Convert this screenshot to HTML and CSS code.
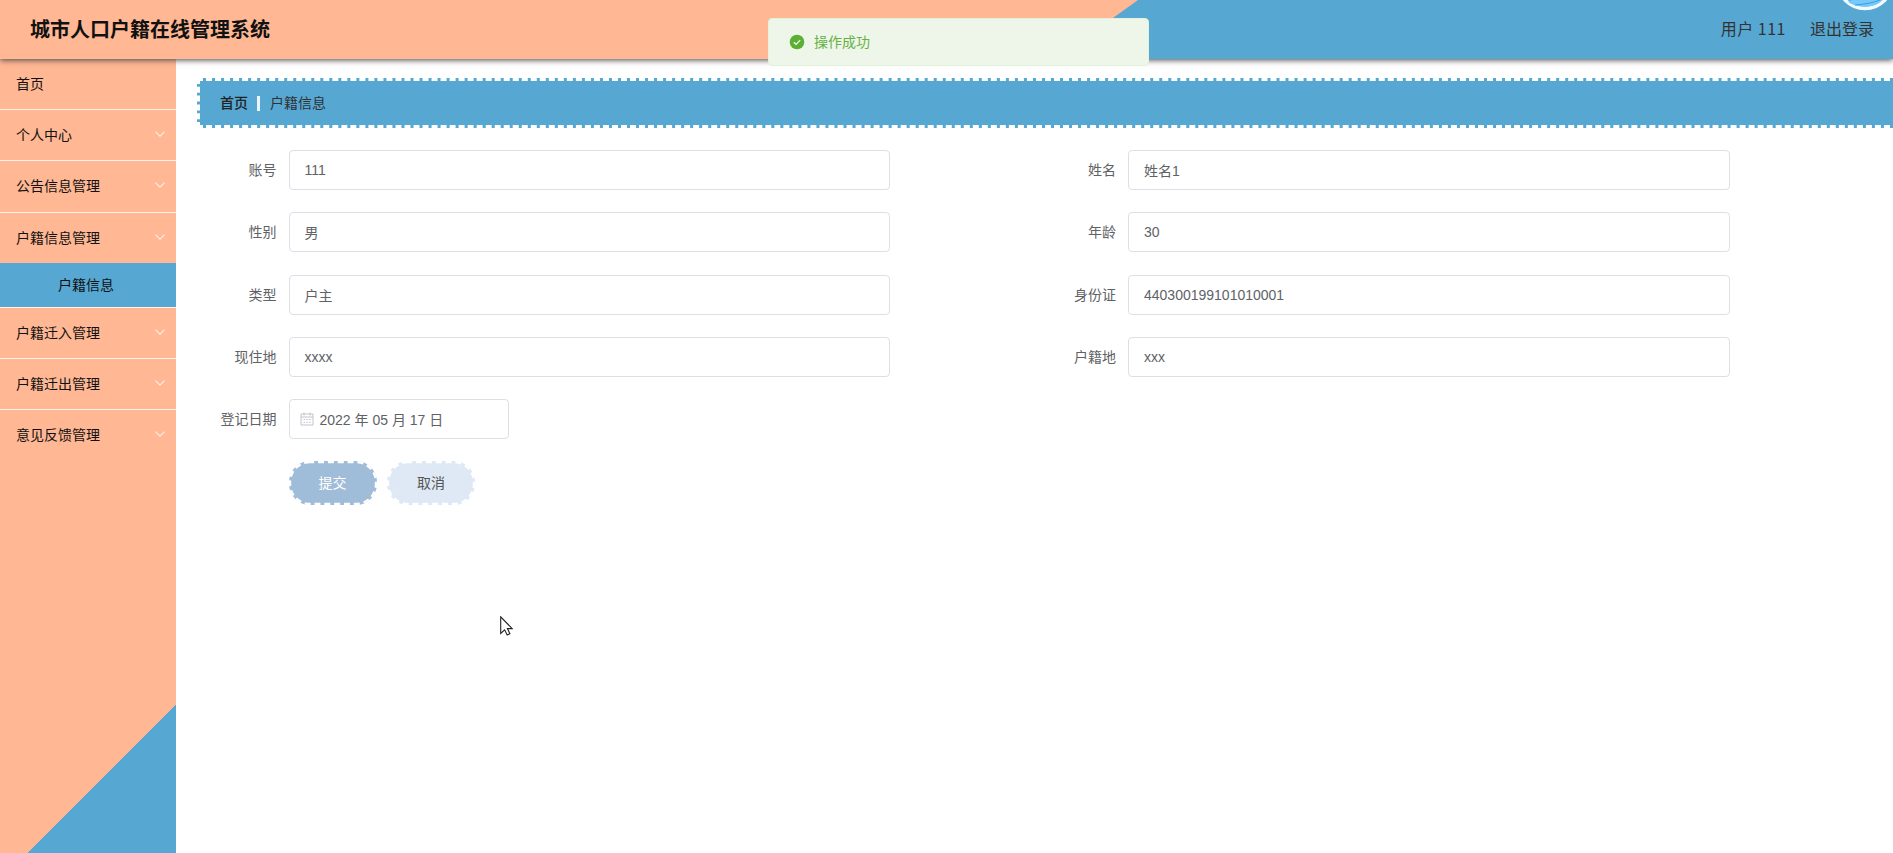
FILE: index.html
```html
<!DOCTYPE html>
<html lang="zh-CN">
<head>
<meta charset="utf-8">
<title>城市人口户籍在线管理系统</title>
<link rel="stylesheet" href="styles.css">
</head>
<body>
<header class="header">
  <h1 class="title">城市人口户籍在线管理系统</h1>
  <div class="account"><span class="user">用户 111</span><span>退出登录</span></div>
</header>
<svg class="avatar" viewBox="0 0 60 60"><circle cx="30" cy="30" r="27.500" fill="#45aefb" stroke="#f4fbff" stroke-width="3.500"/><path d="M13 51Q29 42 50 46Q44 55 32 55.500Q20 56 13 51Z" fill="#76c9fb"/><path d="M20 54Q35 53 45 49" fill="none" stroke="#3c9fe0" stroke-width="1"/></svg>
<div class="toast" role="alert">
  <svg class="toast-icon" viewBox="0 0 16 16"><circle cx="8" cy="8" r="7.300" fill="#5daf34"/><path d="M4.800 8.200l2.300 2.200 4.100-4.300" fill="none" stroke="#f0f9eb" stroke-width="1.300"/></svg>
  <span>操作成功</span>
</div>
<div class="layout">
  <nav class="sidebar">
    <div class="item">首页</div>
    <div class="item">个人中心<svg class="chevron" viewBox="0 0 12 12"><path d="M1.500 3.700L6 8.200l4.500-4.500"/></svg></div>
    <div class="item">公告信息管理<svg class="chevron" viewBox="0 0 12 12"><path d="M1.500 3.700L6 8.200l4.500-4.500"/></svg></div>
    <div class="item open">户籍信息管理<svg class="chevron" viewBox="0 0 12 12"><path d="M1.500 3.700L6 8.200l4.500-4.500"/></svg></div>
    <div class="subitem">户籍信息</div>
    <div class="item">户籍迁入管理<svg class="chevron" viewBox="0 0 12 12"><path d="M1.500 3.700L6 8.200l4.500-4.500"/></svg></div>
    <div class="item">户籍迁出管理<svg class="chevron" viewBox="0 0 12 12"><path d="M1.500 3.700L6 8.200l4.500-4.500"/></svg></div>
    <div class="item last">意见反馈管理<svg class="chevron" viewBox="0 0 12 12"><path d="M1.500 3.700L6 8.200l4.500-4.500"/></svg></div>
  </nav>
  <main class="main">
    <div class="breadcrumb"><span class="home">首页</span><i class="separator"></i><span>户籍信息</span></div>
    <div class="form">
      <div class="field"><label>账号</label><div class="input">111</div></div>
      <div class="field"><label>姓名</label><div class="input">姓名1</div></div>
      <div class="field"><label>性别</label><div class="input">男</div></div>
      <div class="field"><label>年龄</label><div class="input">30</div></div>
      <div class="field"><label>类型</label><div class="input">户主</div></div>
      <div class="field"><label>身份证</label><div class="input">440300199101010001</div></div>
      <div class="field"><label>现住地</label><div class="input">xxxx</div></div>
      <div class="field"><label>户籍地</label><div class="input">xxx</div></div>
      <div class="field"><label>登记日期</label><div class="input date"><svg class="calendar" viewBox="0 0 14 14"><path d="M1 2h12v11H1zM1 5h12M4 .5v3M10 .5v3"/><path d="M3.500 7.500h7M3.500 10.300h7" stroke-dasharray="1.600 1.100"/></svg>2022 年 05 月 17 日</div></div>
    </div>
    <div class="actions">
      <button class="btn submit"><svg class="notches" viewBox="0 0 88 44"><rect x="1" y="1" width="86" height="42" rx="20"/></svg>提交</button>
      <button class="btn cancel"><svg class="notches" viewBox="0 0 88 44"><rect x="1" y="1" width="86" height="42" rx="20"/></svg>取消</button>
    </div>
  </main>
</div>
<svg class="cursor" viewBox="0 0 13 20"><path d="M.7.800v16.700l3.900-3.700 2.600 5.200 2.700-1.300-2.500-5.100h4.800z" fill="#fff" stroke="#222" stroke-width="1.100"/></svg>
</body>
</html>
```
FILE: styles.css
```css
* { box-sizing: border-box; }
body {
  margin: 0;
  height: 853px;
  overflow: hidden;
  display: flex;
  flex-direction: column;
  background: #fff;
  color: #606266;
  font: 14px "Liberation Sans", "Noto Sans CJK SC", sans-serif;
}
.header {
  position: relative;
  z-index: 1;
  flex: none;
  height: 59px;
  padding: 0 19px 2px 30px;
  display: flex;
  align-items: center;
  justify-content: space-between;
  background: #ffb794;
  box-shadow: 0 1px 6px #444;
}
.header::before {
  content: "";
  position: absolute;
  inset: 0;
  background: #57a7d3;
  clip-path: polygon(1138px 0, 100% 0, 100% 100%, 1056px 100%);
}
.title {
  position: relative;
  margin: 0;
  color: #111;
  font: bold 20px "Noto Sans CJK SC", sans-serif;
}
.account {
  position: relative;
  display: flex;
  gap: 24px;
  padding-bottom: 2px;
  color: #333;
  font: 16px "Noto Sans CJK SC", sans-serif;
}
.user { letter-spacing: .5px; }
.avatar {
  position: absolute;
  z-index: 2;
  left: 1835px;
  top: -49.500px;
  width: 60px;
  height: 60px;
}
.toast {
  position: absolute;
  z-index: 3;
  left: 768px;
  top: 18px;
  width: 380.500px;
  height: 48px;
  padding-left: 20px;
  display: flex;
  align-items: center;
  gap: 9px;
  border: 1px solid #e1f3d8;
  border-radius: 4px;
  background: #edf6e8;
  color: #67b045;
}
.toast span { padding-bottom: 2px; }
.toast-icon { width: 16px; height: 16px; }
.layout { flex: 1; display: flex; min-height: 0; }
.sidebar {
  flex: none;
  width: 176px;
  background: linear-gradient(to top left, #57a7d3 0, #57a7d3 50%, transparent 50%) right bottom / 149px 149px no-repeat #ffb794;
  color: #111;
}
.item {
  height: 51.200px;
  padding: 0 10px 2px 16px;
  display: flex;
  align-items: center;
  justify-content: space-between;
  border-bottom: 1px solid #fff2e9;
}
.item.open { height: 50px; border: 0; }
.item.last { height: 50px; border: 0; }
.chevron { width: 12px; height: 12px; fill: none; stroke: #fff1e6; stroke-width: 1.100; }
.subitem {
  height: 45px;
  padding-left: 58px;
  line-height: 44px;
  background: #57a7d3;
  border-bottom: 1px solid #fff2e9;
}
.main { flex: 1; min-width: 0; padding: 19px 0 0 21px; }
.breadcrumb {
  width: 1720px;
  height: 50px;
  padding: 0 0 2px 20px;
  display: flex;
  align-items: center;
  border: 3px dashed #fff;
  background: #57a7d3;
  color: #303133;
}
.home { font-weight: 500; color: #222; }
.separator { width: 3px; height: 15px; margin: 3px 10px 0 9px; background: #eaf5fb; }
.form {
  padding-top: 22.300px;
  display: grid;
  grid-template-columns: 839.500px 839.500px;
  grid-auto-rows: 40px;
  row-gap: 22.200px;
}
.field { display: flex; }
.field label { width: 79.500px; line-height: 40px; text-align: right; }
.input {
  width: 601.500px;
  height: 40px;
  margin-left: 12px;
  padding-left: 15px;
  display: flex;
  align-items: center;
  border: 1px solid #dcdfe6;
  border-radius: 4px;
}
.input.date { width: 220.500px; padding-left: 10px; }
.calendar { width: 14px; height: 14px; margin: 0 6px 0 0; fill: none; stroke: #c0c4cc; stroke-width: 1; }
.actions { display: flex; gap: 10.500px; padding: 22px 0 0 91.600px; }
.btn {
  position: relative;
  width: 88px;
  height: 44px;
  padding: 0 0 2px;
  border: 0;
  border-radius: 21px;
  font: inherit;
}
.notches {
  position: absolute;
  inset: 0;
  width: 88px;
  height: 44px;
  fill: none;
  stroke: #fff;
  stroke-width: 2.400;
  stroke-dasharray: 6 3.850;
  stroke-dashoffset: 1.800;
}
.submit { background: #9fbdd9; color: #fff; }
.cancel { background: #dfe9f5; color: #555; }
.cursor { position: absolute; left: 500px; top: 616px; width: 13px; height: 20px; }
```
